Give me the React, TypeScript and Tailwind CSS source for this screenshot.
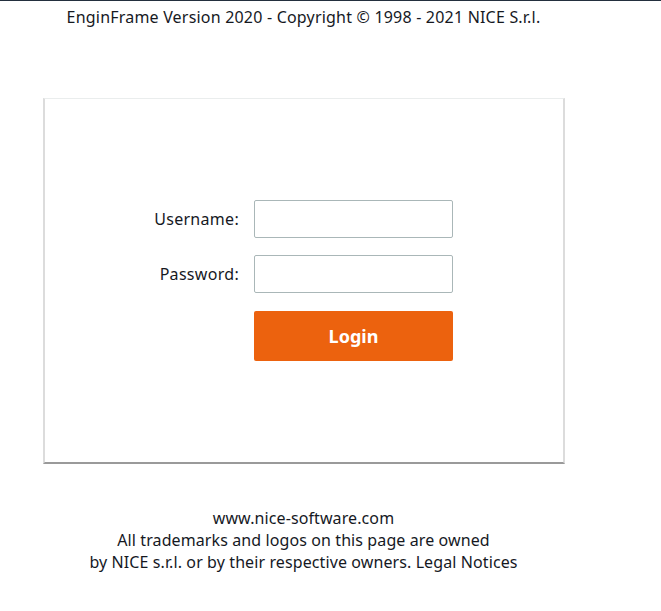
export default function App() {
  return (
    <div className="min-h-[611px] border-t border-[#232f3e] bg-white font-['Noto_Sans',sans-serif] text-[16px] text-[#16191f]">
      <div className="w-[607px]">
        <p className="pt-[5px] text-center leading-[22px] tracking-[0.2px]">
          EnginFrame Version 2020 - Copyright © 1998 - 2021 NICE S.r.l.
        </p>

        <div className="ml-[43px] mt-[70px] h-[366px] w-[522px] border-x-2 border-t border-b-2 border-x-[#dcdcdc] border-t-[#eaeded] border-b-[#9a9a9a] bg-white pt-[101px]">
          <form className="flex flex-col">
            <div className="flex items-center">
              <label className="w-[209px] pr-[15px] text-right tracking-[0.3px]">Username:</label>
              <input
                type="text"
                className="h-[38px] w-[199px] rounded-[2px] border border-[#aab7b8] px-2 outline-none"
              />
            </div>
            <div className="mt-[17px] flex items-center">
              <label className="w-[209px] pr-[15px] text-right tracking-[0.3px]">Password:</label>
              <input
                type="password"
                className="h-[38px] w-[199px] rounded-[2px] border border-[#aab7b8] px-2 outline-none"
              />
            </div>
            <div className="ml-[209px] mt-[18px]">
              <button
                type="button"
                className="h-[50px] w-[199px] rounded-[2px] bg-[#ec620e] text-[18px] font-bold text-white"
              >
                Login
              </button>
            </div>
          </form>
        </div>

        <div className="mt-[43px] text-center leading-[22px] tracking-[0.1px]">
          <p>www.nice-software.com</p>
          <p>All trademarks and logos on this page are owned</p>
          <p>by NICE s.r.l. or by their respective owners. Legal Notices</p>
        </div>
      </div>
    </div>
  );
}
